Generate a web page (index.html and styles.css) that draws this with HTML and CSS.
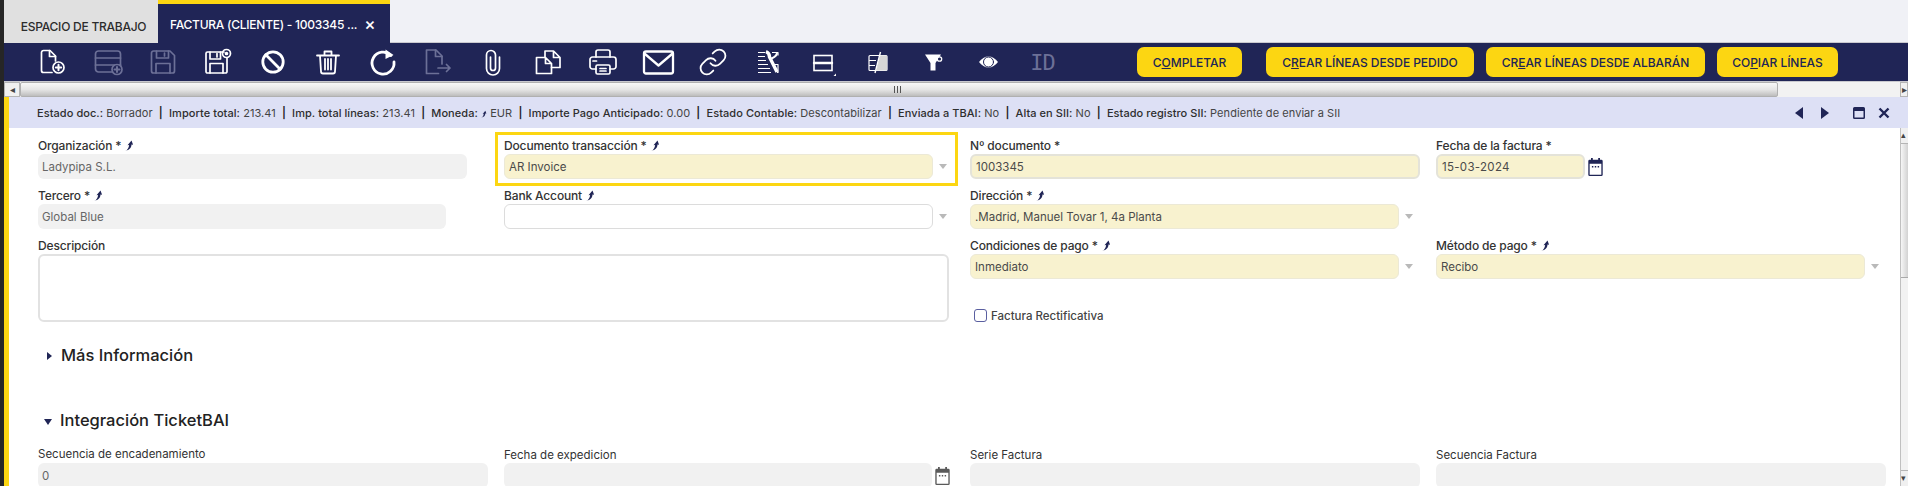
FILE: index.html
```html
<!DOCTYPE html>
<html lang="es">
<head>
<meta charset="utf-8">
<title>Factura (Cliente)</title>
<link rel="stylesheet" href="styles.css">
</head>
<body>
<svg class="defs" width="0" height="0" aria-hidden="true">
  <defs>
    <symbol id="zoom" viewBox="0 0 10 12"><path d="M.5 11.800C3 10.800 4.200 8.600 4.600 5.400L2.800 5.800 7.200.4 9 5.200 7.200 5C7.100 8.600 5 11.300.5 11.800Z"/></symbol>
    <symbol id="cal" viewBox="0 0 16 20"><path d="M3 0h2v2h6V0h2v2h1.500A1.500 1.500 0 0 1 16 3.500V18.500A1.500 1.500 0 0 1 14.500 20h-13A1.500 1.500 0 0 1 0 18.500V3.500A1.500 1.500 0 0 1 1.500 2H3ZM1.500 6.500v12h13v-12ZM4 9h1.600v1.600H4ZM7.200 9h1.600v1.600H7.200ZM10.400 9H12v1.600h-1.600Z"/></symbol>
  </defs>
</svg>
<div class="tabbar">
  <div class="tab">ESPACIO DE TRABAJO</div>
  <div class="tab tab-active"><span>FACTURA (CLIENTE) - 1003345 ...</span><span class="tab-close">×</span></div>
</div>
<div class="toolbar">
  <div class="tool"><svg viewBox="0 0 28 28"><path d="M13 24.500H4.500a2 2 0 0 1-2-2V4.500a2 2 0 0 1 2-2H11l5.500 5.500v5"/><path d="M10.500 2.500V8.500h6"/><circle cx="19.500" cy="19.500" r="5.500"/><path d="M19.500 16.800v5.400M16.800 19.500h5.400" stroke-width="2"/></svg></div>
  <div class="tool off"><svg viewBox="0 0 28 28"><rect x="1.500" y="3" width="25" height="21" rx="3"/><path d="M1.500 10h25M1.500 17h25"/><circle cx="23" cy="21.500" r="5" class="knock"/><path d="M23 19v5M20.500 21.500h5" stroke-width="2"/></svg></div>
  <div class="tool off"><svg viewBox="0 0 28 28"><path d="M5 3h16l4.500 4.500V23a2 2 0 0 1-2 2h-19a2 2 0 0 1-2-2V5a2 2 0 0 1 2-2Z"/><path d="M7.500 3v7h12V3M15.500 5v3M7 25v-9.500h14V25"/></svg></div>
  <div class="tool"><svg viewBox="0 0 28 28"><path d="M20 4H3.500a1.500 1.500 0 0 0-1.500 1.500v18A1.500 1.500 0 0 0 3.500 25h18a1.500 1.500 0 0 0 1.500-1.500V10"/><path d="M6 4v7h10.500V4M13 5.500v3.500M6 25v-9.500h13V25"/><circle cx="22.500" cy="5.500" r="4"/><circle cx="22.500" cy="5.500" r="1" class="solid"/></svg></div>
  <div class="tool"><svg viewBox="0 0 28 28" class="thick"><circle cx="14" cy="14" r="10.200"/><path d="M6.800 6.800l14.400 14.400"/></svg></div>
  <div class="tool"><svg viewBox="0 0 28 28"><path d="M3 7.500h22M10.500 7V3.500h7V7M6 7.500l1 16a2 2 0 0 0 2 2h10a2 2 0 0 0 2-2l1-16M11 11v10.500M14 11v10.500M17 11v10.500" stroke-width="1.800"/></svg></div>
  <div class="tool"><svg viewBox="0 0 28 28" class="thick"><path d="M22 7.500A11 11 0 1 0 25 14"/><path class="solid" stroke="none" d="M16.500 1.500 24.500 7l-8 4Z"/></svg></div>
  <div class="tool off"><svg viewBox="0 0 28 28"><path d="M14.500 25.500H2.500V2h9.500l6 6v8"/><path d="M11.500 2v6.500H18M14 20h12M22.500 16.500 26 20l-3.500 3.500"/></svg></div>
  <div class="tool"><svg viewBox="0 0 28 28"><path d="M11.500 9v11a2.500 2.500 0 0 0 5 0V7a4.500 4.500 0 0 0-9 0v13.500a6.500 6.500 0 0 0 13 0V9"/></svg></div>
  <div class="tool"><svg viewBox="0 0 28 28"><path d="M11.500 9.500H2.500V25.500H17.500V15.500ZM11.500 9.500V15.500H17.500"/><path d="M11 9V3H19.500L26 9.500V19.500H17.500M19.500 3V9.500H26"/></svg></div>
  <div class="tool"><svg viewBox="0 0 28 28"><path d="M7 9V4a2 2 0 0 1 2-2h10a2 2 0 0 1 2 2v5"/><path d="M7 21H3.500A2.500 2.500 0 0 1 1 18.500V11.500A2.500 2.500 0 0 1 3.500 9h21A2.500 2.500 0 0 1 27 11.500v7A2.500 2.500 0 0 1 24.500 21H21"/><rect x="7" y="17" width="14" height="9" rx="1.500"/><path d="M11 20.500h6M11 23h6M4 13h3.500"/></svg></div>
  <div class="tool"><svg viewBox="0 0 28 28"><rect x="0" y="3.500" width="29" height="22" rx="2" stroke-width="2.300"/><path d="M1 6 14.500 17.500 28 6" stroke-width="2.300"/></svg></div>
  <div class="tool"><svg viewBox="0 0 28 28"><g transform="translate(-1 -1) scale(1.250)" stroke-width="1.450"><path d="M10 13a5 5 0 0 0 7.540.54l3-3a5 5 0 0 0-7.070-7.070l-1.720 1.710"/><path d="M14 11a5 5 0 0 0-7.540-.54l-3 3a5 5 0 0 0 7.070 7.070l1.710-1.710"/></g></svg></div>
  <div class="tool"><svg viewBox="0 0 28 28" class="fine"><path d="M4 4.500h7M4 8.500h7M4 12.500h8M4 16.500h10M4 20.500h12M4 24.500h13M18 4.500h6v3M21 16.500h3v8h-1"/><path d="M12 3.500c2.500 1 3.500 3 3.500 5.500L23 24" stroke-width="3.400"/><path d="M23 4.500c0 2.500-2 4.500-5.500 6" stroke-width="2"/></svg></div>
  <div class="tool"><svg viewBox="0 0 28 28"><rect x="5" y="7.500" width="18" height="15" class="sharp" stroke-width="1.600"/><path d="M5 15h18" stroke-width="2.400"/><path class="solid" stroke="none" d="M27 25.500V28H24.500Z"/></svg></div>
  <div class="tool"><svg viewBox="0 0 28 28" class="fine"><rect x="5" y="7.500" width="18" height="15" rx="1"/><path d="M5 12.500h7M5 17.500h6"/><path class="light" stroke="none" d="M16 7.500h7v15H12Z"/><path d="M16.500 4 11 25" stroke-width="1.400"/></svg></div>
  <div class="tool"><svg viewBox="0 0 28 28"><path class="solid" stroke="none" d="M6 6.500h16l-5.500 8.500v7.500h-5V15Z"/><circle cx="20.500" cy="11" r="2.200" stroke-width="1.300" class="knock"/></svg></div>
  <div class="tool"><svg viewBox="0 0 28 28"><path class="solid" stroke="none" d="M5 14C7.500 10.500 11 8.500 14.500 8.500S21.500 10.500 24 14C21.500 17.500 18 19.500 14.500 19.500S7.500 17.500 5 14Z"/><circle cx="14.500" cy="14" r="5" stroke="#202556" stroke-width="1"/></svg></div>
  <div class="tool tool-id">ID</div>
  <div class="actions">
    <button class="action action-complete" type="button">C<u>O</u>MPLETAR</button>
    <button class="action action-pedido" type="button">C<u>R</u>EAR LÍNEAS DESDE PEDIDO</button>
    <button class="action action-albaran" type="button">CR<u>E</u>AR LÍNEAS DESDE ALBARÁN</button>
    <button class="action action-copy" type="button">CO<u>P</u>IAR LÍNEAS</button>
  </div>
</div>
<div class="hscroll">
  <div class="sb-btn">◂</div>
  <div class="hthumb"><span class="grip"></span></div>
  <div class="sb-btn sb-right">▸</div>
</div>
<div class="status">
  <div class="status-text">
    <b>Estado doc.:</b> Borrador <i>|</i> <b>Importe total:</b> 213.41 <i>|</i> <b>Imp. total líneas:</b> 213.41 <i>|</i> <b>Moneda:</b> <svg class="zoom-icon small"><use href="#zoom"/></svg> EUR <i>|</i> <b>Importe Pago Anticipado:</b> 0.00 <i>|</i> <b>Estado Contable:</b> Descontabilizar <i>|</i> <b>Enviada a TBAI:</b> No <i>|</i> <b>Alta en SII:</b> No <i>|</i> <b>Estado registro SII:</b> Pendiente de enviar a SII
  </div>
  <div class="status-nav">
    <span class="tri-left"></span>
    <span class="tri-right"></span>
    <svg class="win" viewBox="0 0 12 12"><path d="M1.500 0h9A1.500 1.500 0 0 1 12 1.500v9a1.500 1.500 0 0 1-1.500 1.500h-9A1.500 1.500 0 0 1 0 10.500v-9A1.500 1.500 0 0 1 1.500 0ZM1.500 4v6.500h9V4Z"/></svg>
    <svg class="close" viewBox="0 0 12 12"><path d="M1.500 1.500l9 9M10.500 1.500l-9 9"/></svg>
  </div>
</div>
<div class="content">
  <div class="form">
    <div class="top-grid">
      <div class="cell">
        <label class="label">Organización * <svg class="zoom-icon"><use href="#zoom"/></svg></label>
        <div class="line"><div class="field gray w429">Ladypipa S.L.</div></div>
      </div>
      <div class="cell cell-mark">
        <label class="label">Documento transacción * <svg class="zoom-icon"><use href="#zoom"/></svg></label>
        <div class="line"><div class="field yellow w429">AR Invoice</div><span class="arrow"></span></div>
      </div>
      <div class="cell">
        <label class="label">Nº documento *</label>
        <div class="line"><div class="field yellow thick-edge w450">1003345</div></div>
      </div>
      <div class="cell">
        <label class="label">Fecha de la factura *</label>
        <div class="line"><div class="field yellow thick-edge w149 date-text">15-03-2024</div><svg class="cal"><use href="#cal"/></svg></div>
      </div>

      <div class="cell">
        <label class="label">Tercero * <svg class="zoom-icon"><use href="#zoom"/></svg></label>
        <div class="line"><div class="field gray w408">Global Blue</div></div>
      </div>
      <div class="cell">
        <label class="label">Bank Account <svg class="zoom-icon"><use href="#zoom"/></svg></label>
        <div class="line"><div class="field white w429"></div><span class="arrow"></span></div>
      </div>
      <div class="cell">
        <label class="label">Dirección * <svg class="zoom-icon"><use href="#zoom"/></svg></label>
        <div class="line"><div class="field yellow w429">.Madrid, Manuel Tovar 1, 4a Planta</div><span class="arrow"></span></div>
      </div>
      <div class="cell"></div>

      <div class="cell cell-desc">
        <label class="label">Descripción</label>
        <div class="textarea"></div>
      </div>
      <div class="cell row-three">
        <label class="label">Condiciones de pago * <svg class="zoom-icon"><use href="#zoom"/></svg></label>
        <div class="line"><div class="field yellow w429">Inmediato</div><span class="arrow"></span></div>
      </div>
      <div class="cell row-three">
        <label class="label">Método de pago * <svg class="zoom-icon"><use href="#zoom"/></svg></label>
        <div class="line"><div class="field yellow w429">Recibo</div><span class="arrow"></span></div>
      </div>
      <div class="cell check-cell">
        <span class="check"></span><span class="check-label">Factura Rectificativa</span>
      </div>
    </div>

    <div class="section section-more"><span class="tri-closed"></span>Más Información</div>
    <div class="section section-bai"><span class="tri-open"></span>Integración TicketBAI</div>

    <div class="bai-grid">
      <div class="cell">
        <label class="label mini">Secuencia de encadenamiento</label>
        <div class="line"><div class="field gray w450">0</div></div>
      </div>
      <div class="cell">
        <label class="label mini lower">Fecha de expedicion</label>
        <div class="line"><div class="field gray w428"></div><svg class="cal cal-gray"><use href="#cal"/></svg></div>
      </div>
      <div class="cell">
        <label class="label mini lower">Serie Factura</label>
        <div class="line"><div class="field gray w450"></div></div>
      </div>
      <div class="cell">
        <label class="label mini lower">Secuencia Factura</label>
        <div class="line"><div class="field gray w450"></div></div>
      </div>
    </div>
  </div>
  <div class="vscroll">
    <div class="vbtn">▴</div>
    <div class="vthumb"></div>
    <div class="vbtn vbtn-end">▾</div>
  </div>
</div>
</body>
</html>
```
FILE: styles.css
```css
*, *::after { box-sizing: border-box; }
html, body { margin: 0; padding: 0; height: 486px; overflow: hidden; }
body {
  display: flex;
  flex-direction: column;
  border-left: 4px solid #262626;
  background: #fff;
  color: #3a3a3a;
  font-family: Inter, "Noto Sans", "Liberation Sans", sans-serif;
  font-size: 12px;
}
.defs { position: absolute; }

.tabbar {
  height: 43px;
  flex: none;
  display: flex;
  padding-left: 5px;
  background: #f0f1f6;
  border-bottom: 1px solid #c9c9cf;
}
.tab {
  width: 149px;
  background: #e0e0e0;
  color: #2c2c2c;
  font-size: 12px;
  font-weight: 500;
  display: flex;
  align-items: center;
  justify-content: center;
  padding-top: 9px;
  letter-spacing: -.25px;
  margin-bottom: -1px;
  box-shadow: -5px 0 0 #e0e0e0;
}
.tab-active {
  width: 232px;
  background: #202556;
  border-top: 4px solid #fcd612;
  color: #fff;
  justify-content: flex-start;
  padding: 1px 0 0 12px;
  box-shadow: none;
}
.tab-close { margin-left: 7px; font-size: 17px; font-weight: 500; }

.toolbar {
  height: 39px;
  flex: none;
  display: flex;
  align-items: center;
  padding: 0 70px 0 21px;
  background: #202556;
  border-bottom: 1px solid #c9c9cf;
}
.tool {
  width: 55px;
  flex: none;
  height: 28px;
  color: #fff;
  display: flex;
  align-items: center;
  justify-content: center;
}
.tool svg {
  width: 28px;
  height: 28px;
  overflow: visible;
  fill: none;
  stroke: currentColor;
  stroke-width: 1.700;
  stroke-linecap: round;
  stroke-linejoin: round;
}
.tool svg.thick { stroke-width: 2.800; }
.tool svg.fine { stroke-width: 1.200; stroke-linecap: butt; }
.tool .solid { fill: currentColor; }
.tool .knock { fill: #202556; }
.tool .light { fill: #d6d6d6; }
.tool .sharp { stroke-linejoin: miter; }
.tool.off { color: #6c7097; }
.tool-id {
  color: #6c7097;
  font-family: "DejaVu Sans Mono", monospace;
  font-size: 22px;
  letter-spacing: -1px;
}
.actions { margin-left: auto; display: flex; gap: 12px; }
.action {
  height: 30px;
  padding: 0;
  border: 0;
  border-radius: 7px;
  background: #fcd612;
  color: #202556;
  font-family: inherit;
  font-size: 12px;
  font-weight: 500;
  letter-spacing: -.05px;
}
.action-complete { width: 105px; margin-right: 12px; }
.action-pedido { width: 208px; }
.action-albaran { width: 219px; }
.action-copy { width: 121px; }

.hscroll {
  height: 15px;
  flex: none;
  display: flex;
  background: #f2f2f2;
}
.sb-btn {
  width: 16px;
  flex: none;
  background: #f0f0f0;
  border: 1px solid #b5b5b5;
  color: #444;
  font-size: 10px;
  line-height: 12px;
  text-align: center;
}
.sb-right { width: 8px; margin-left: auto; overflow: hidden; }
.hthumb {
  width: 1758px;
  flex: none;
  display: flex;
  align-items: center;
  justify-content: center;
  background: linear-gradient(#f8f8f8, #e6e6e6 50%, #bdbdbd);
  border: 1px solid #b0b0b0;
  border-radius: 2px;
}
.grip {
  width: 7px;
  height: 7px;
  margin-left: -3px;
  background: repeating-linear-gradient(90deg, #555 0 1px, transparent 1px 3px);
}

.status {
  height: 31px;
  flex: none;
  display: flex;
  align-items: center;
  justify-content: space-between;
  padding-left: 28px;
  background: #dde0f5;
  border-left: 5px solid #fcd612;
  font-size: 11px;
  color: #444;
  white-space: nowrap;
}
.status-text { letter-spacing: .06px; }
.status b { font-weight: 500; color: #2e2e2e; }
.status i { font-style: normal; font-weight: 600; color: #222; margin: 0 3px; }
.status-nav {
  display: flex;
  align-items: center;
  margin-right: 18px;
}
.tri-left, .tri-right { width: 0; height: 0; border-top: 6px solid transparent; border-bottom: 6px solid transparent; }
.tri-left { border-right: 8px solid #202556; }
.tri-right { margin-left: 18px; border-left: 8px solid #202556; }
.win { width: 12px; height: 12px; margin-left: 24px; fill: #202556; }
.close { width: 12px; height: 12px; margin-left: 13px; fill: none; stroke: #202556; stroke-width: 2.400; }

.content { flex: 1; min-height: 0; display: flex; border-left: 5px solid #fcd612; overflow: hidden; }
.form { flex: 1; min-width: 0; padding: 9px 0 0 29px; }
.top-grid {
  display: grid;
  grid-template-columns: repeat(4, 466px);
  grid-template-rows: 50px 50px 51px 55px;
}
.cell { position: relative; }
.cell-mark::after {
  content: "";
  position: absolute;
  left: -9px;
  top: -5px;
  width: 463px;
  height: 54px;
  border: 3px solid #fcd612;
  pointer-events: none;
}
.cell-desc { grid-column: 1 / span 2; grid-row: 3 / span 2; }
.row-three { grid-row: 3; }
.check-cell { grid-column: 3; grid-row: 4; display: flex; align-items: flex-start; padding: 21px 0 0 4px; }
.label {
  display: flex;
  align-items: center;
  gap: 1px;
  height: 17px;
  color: #333;
  font-size: 12px;
  font-weight: 500;
  letter-spacing: -.15px;
  white-space: pre;
}
.zoom-icon { width: 9px; height: 11px; fill: #202556; }
.zoom-icon.small { width: 6px; height: 8px; vertical-align: -1px; }
.line { display: flex; align-items: center; }
.field {
  height: 25px;
  flex: none;
  display: flex;
  align-items: center;
  padding: 0 4px;
  border-radius: 6px;
  color: #4a4a4a;
  font-size: 11.500px;
}
.gray { background: #f1f1f1; color: #666; }
.yellow { background: #f8f2cf; border: 1px solid #ece9d6; }
.white { background: #fff; border: 1px solid #dcdcdc; }
.thick-edge { border: 2px solid #e4e3d9; }
.date-text { letter-spacing: .3px; }
.w408 { width: 408px; }
.w428 { width: 428px; }
.w429 { width: 429px; }
.w450 { width: 450px; }
.w149 { width: 149px; }
.arrow {
  width: 0;
  height: 0;
  margin-left: 6px;
  border-left: 4px solid transparent;
  border-right: 4px solid transparent;
  border-top: 5px solid #b9b9b9;
}
.cal { width: 15px; height: 18px; margin-left: 3px; fill: #202556; }
.cal-gray { fill: #5a5a5a; }
.textarea {
  width: 911px;
  height: 68px;
  background: #fff;
  border: 2px solid #e2e2e2;
  border-radius: 6px;
}
.check {
  width: 13px;
  height: 13px;
  flex: none;
  border: 1px solid #5a5fa0;
  border-radius: 3px;
  background: #fff;
}
.check-label { margin-left: 4px; font-size: 11.500px; font-weight: 500; color: #444; }

.section {
  display: flex;
  align-items: center;
  height: 24px;
  color: #222;
  font-size: 16.500px;
  font-weight: 500;
}
.section-bai { margin-top: 41px; }
.tri-closed, .tri-open { width: 0; height: 0; }
.tri-closed {
  margin: 2px 9px 0 9px;
  border-top: 4px solid transparent;
  border-bottom: 4px solid transparent;
  border-left: 5px solid #202556;
}
.tri-open {
  margin: 3px 8px 0 6px;
  border-left: 4px solid transparent;
  border-right: 4px solid transparent;
  border-top: 6px solid #202556;
}
.bai-grid {
  display: grid;
  grid-template-columns: repeat(4, 466px);
  margin-top: 13px;
}
.mini { font-size: 11.500px; font-weight: 400; letter-spacing: 0; }
.lower { padding-top: 2px; }
.bai-grid .line { margin-top: 1px; }

.vscroll {
  width: 8px;
  flex: none;
  display: flex;
  flex-direction: column;
  background: #f2f2f2;
  border-left: 1px solid #c0c0c0;
}
.vbtn {
  height: 16px;
  flex: none;
  overflow: hidden;
  color: #444;
  font-size: 9px;
  line-height: 14px;
  background: #f0f0f0;
  border-bottom: 1px solid #b5b5b5;
}
.vthumb { height: 134px; flex: none; background: linear-gradient(90deg, #f6f6f6, #d2d2d2); border-bottom: 1px solid #aaa; }
.vbtn-end { margin-top: auto; border-bottom: 0; border-top: 1px solid #b5b5b5; }
```
